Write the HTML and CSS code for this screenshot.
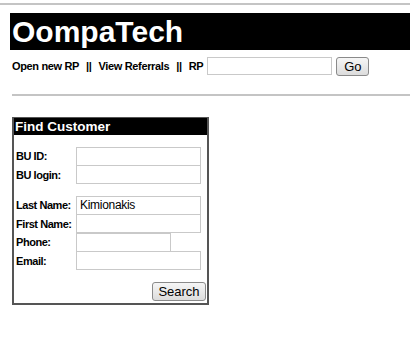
FILE: index.html
```html
<!DOCTYPE html>
<html lang="en">
<head>
    <meta charset="UTF-8">
    <title>OompaTech</title>
    <link rel="stylesheet" href="styles.css">
</head>
<body>
    <div class="rule rule-top"></div>
    <div class="page">
        <h1 class="brand">OompaTech</h1>
        <div class="nav">
            <a href="#">Open new RP</a>
            <span class="sep">||</span>
            <a href="#">View Referrals</a>
            <span class="sep">||</span>
            <label for="rp">RP</label>
            <input type="text" id="rp" class="rp-input">
            <button class="btn go">Go</button>
        </div>
        <div class="rule rule-mid"></div>

        <div class="find-box">
            <div class="find-title">Find Customer</div>
            <div class="find-body">
                <div class="field-group">
                    <div class="field"><label>BU ID:</label><input type="text"></div>
                    <div class="field"><label>BU login:</label><input type="text"></div>
                </div>
                <div class="field-group">
                    <div class="field"><label>Last Name:</label><input type="text" value="Kimionakis"></div>
                    <div class="field"><label>First Name:</label><input type="text"></div>
                    <div class="field"><label>Phone:</label><input type="text" class="short"></div>
                    <div class="field"><label>Email:</label><input type="text"></div>
                </div>
                <div class="actions">
                    <button class="btn search">Search</button>
                </div>
            </div>
        </div>
    </div>
</body>
</html>
```
FILE: styles.css
```css
body {
    margin: 0;
    padding-top: 3px;
    font-family: "Liberation Sans", Arial, sans-serif;
    color: #000;
    background: #fff;
}
.rule {
    height: 2px;
    background-color: #c4c4c4;
}
.rule-top {
    width: 410px;
}
.page {
    padding-left: 10px;
    width: 400px;
}
.brand {
    margin: 8px 0 0 0;
    height: 37px;
    line-height: 37px;
    background-color: #000;
    color: #fff;
    font-size: 30px;
    font-weight: bold;
    padding-left: 2px;
}
.nav {
    display: flex;
    align-items: center;
    margin-top: 7px;
    padding-left: 2px;
    height: 18px;
    font-size: 11px;
    font-weight: bold;
    letter-spacing: -0.35px;
}
.nav a {
    color: #000;
    text-decoration: none;
}
.nav .sep {
    margin: 0 7px;
}
.nav label {
    margin-right: 4px;
}
.rp-input {
    box-sizing: border-box;
    width: 125px;
    height: 18px;
    border: 1px solid #c9c9c9;
    padding: 0 3px;
}
.btn {
    font-family: "Liberation Sans", Arial, sans-serif;
    font-size: 13px;
    border: 1px solid #8a8a8a;
    border-radius: 3px;
    background: linear-gradient(#f6f6f6, #dcdcdc);
    color: #000;
    padding: 0;
    box-sizing: border-box;
    letter-spacing: 0;
}
.go {
    margin-left: 4px;
    width: 33px;
    height: 19px;
}
.rule-mid {
    margin-top: 19px;
    margin-left: 2px;
}
.find-box {
    margin-top: 21px;
    margin-left: 2px;
    width: 197px;
    height: 188px;
    box-sizing: border-box;
    border: 2px solid #555;
    border-top: 1px solid #555;
}
.find-title {
    background-color: #000;
    color: #fff;
    font-size: 13.5px;
    font-weight: bold;
    height: 17px;
    line-height: 17px;
    padding-left: 1px;
}
.find-body {
    padding: 12px 5px 0 2px;
}
.field-group {
    margin-bottom: 12px;
}
.field {
    display: flex;
    align-items: center;
    height: 18.5px;
}
.field label {
    flex-shrink: 0;
    width: 60px;
    font-size: 11px;
    font-weight: bold;
    letter-spacing: -0.45px;
}
.field input {
    box-sizing: border-box;
    width: 125px;
    height: 19px;
    border: 1px solid #c9c9c9;
    font-family: "Liberation Sans", Arial, sans-serif;
    font-size: 12px;
    letter-spacing: -0.3px;
    padding: 0 3px;
}
.field input.short {
    width: 95px;
}
.actions {
    display: flex;
    justify-content: flex-end;
    margin-top: 3px;
}
.search {
    width: 54px;
    height: 19px;
    margin-right: -4px;
}
```
